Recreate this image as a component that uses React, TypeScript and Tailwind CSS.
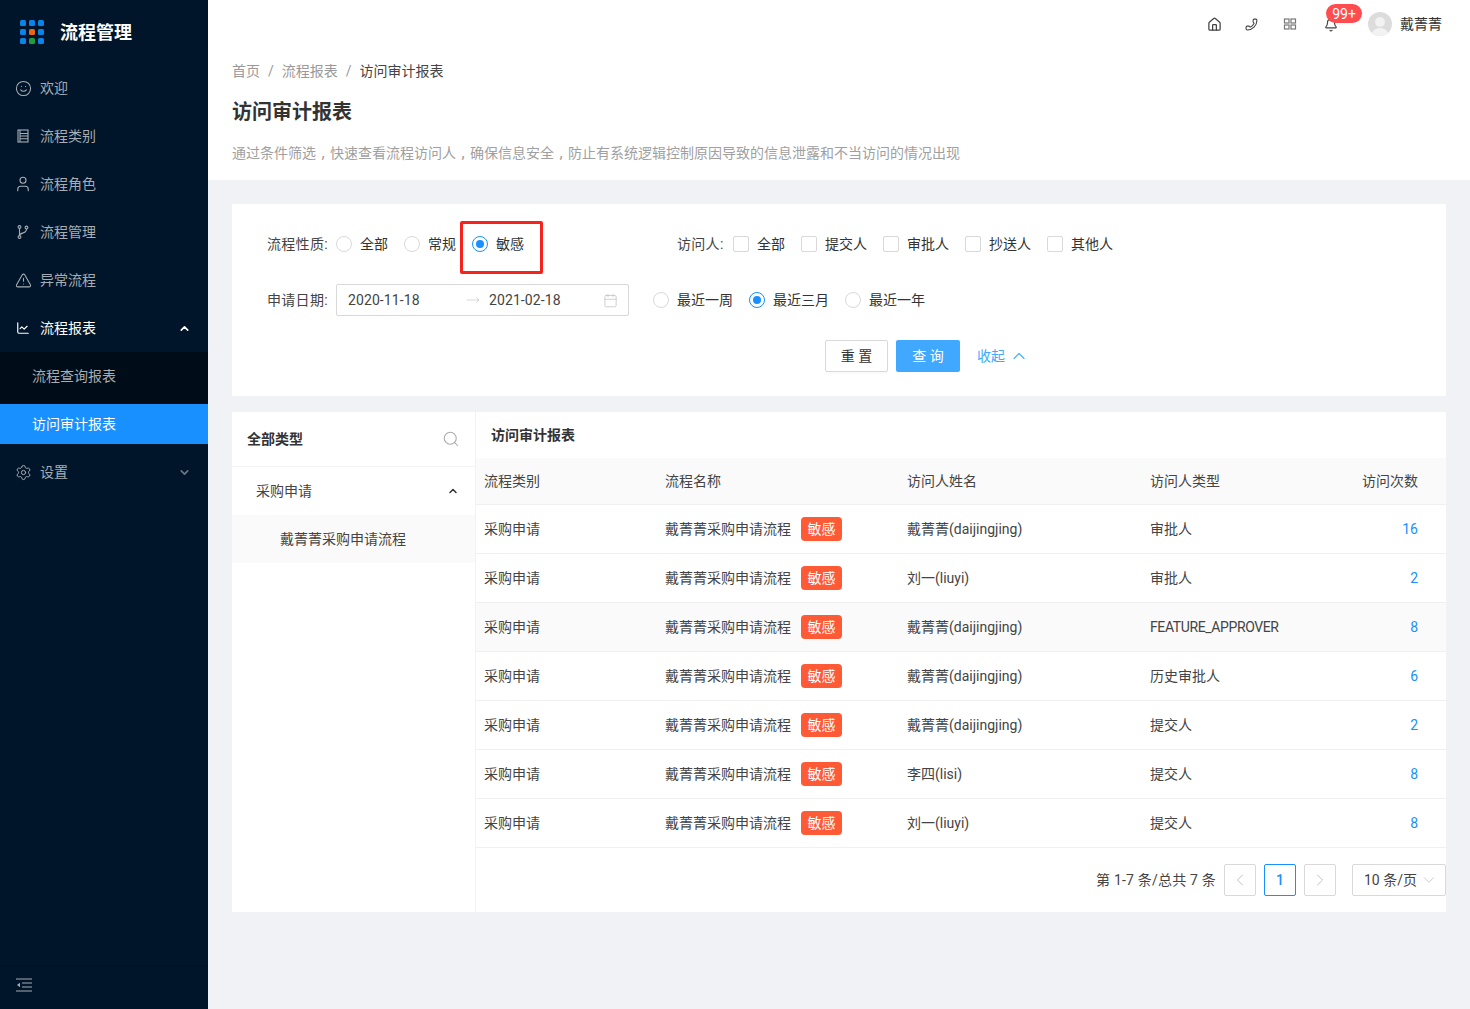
import React from "react";
import {
  Smile, User, TriangleAlert, ChartLine, Settings, ChevronUp, ChevronDown, ChevronLeft, ChevronRight,
  Home, Phone, Bell, Search, Calendar, MoveRight,
} from "lucide-react";

const FONT = { fontFamily: 'Roboto, "Noto Sans CJK SC", sans-serif' };

const rows = [
  { name: "戴菁菁(daijingjing)", type: "审批人", count: "16" },
  { name: "刘一(liuyi)", type: "审批人", count: "2" },
  { name: "戴菁菁(daijingjing)", type: "FEATURE_APPROVER", count: "8", hover: true },
  { name: "戴菁菁(daijingjing)", type: "历史审批人", count: "6" },
  { name: "戴菁菁(daijingjing)", type: "提交人", count: "2" },
  { name: "李四(lisi)", type: "提交人", count: "8" },
  { name: "刘一(liuyi)", type: "提交人", count: "8" },
];

const Logo = () => {
  const dots = ["bg-[#0a84e8]", "bg-[#0a84e8]", "bg-[#0a84e8]", "bg-[#0a84e8]", "bg-[#e8651a]", "bg-[#0a84e8]", "bg-[#0a84e8]", "bg-[#1f9d3d]", "bg-[#0a84e8]"];
  return (
    <div className="grid grid-cols-[6px_6px_6px] gap-[3px]">
      {dots.map((c, i) => <span key={i} className={`h-[6px] w-[6px] rounded-[1.5px] ${c}`} />)}
    </div>
  );
};

const ListIcon = () => (
  <svg width="14" height="14" viewBox="0 0 14 14" fill="none" stroke="currentColor" strokeWidth="1.1">
    <rect x="2" y="1" width="10" height="12" />
    <path d="M4 1v12M4 4.5h8M4 7h8M4 9.7h8" />
  </svg>
);

const BranchIcon = () => (
  <svg width="14" height="14" viewBox="0 0 14 14" fill="none" stroke="currentColor" strokeWidth="1.1">
    <circle cx="3.5" cy="2" r="1.4" />
    <circle cx="3.5" cy="12" r="1.4" />
    <circle cx="10.5" cy="2.5" r="1.4" />
    <path d="M3.5 3.4v7.2M10.5 3.9c0 3-2 3.6-4 4.2-1.6.5-3 1-3 2.5" />
  </svg>
);

const MenuItem = ({ icon, label, active, arrow }: { icon: React.ReactNode; label: string; active?: boolean; arrow?: "up" | "down" }) => (
  <div className={`mb-2 flex h-10 items-center pl-4 pr-[17px] text-sm ${active ? "text-white" : "text-[#a6adb4]"}`}>
    <span className="flex w-6 items-center">{icon}</span>
    <span className="flex-1">{label}</span>
    {arrow === "up" && <ChevronUp size={13} strokeWidth={3} />}
    {arrow === "down" && <ChevronDown size={13} strokeWidth={3} className="text-[#6b7885]" />}
  </div>
);

const Sidebar = () => (
  <aside className="flex w-[208px] shrink-0 flex-col bg-[#001529]">
    <div className="flex h-[64px] items-center gap-[16px] pl-5">
      <Logo />
      <span className="text-[18px] font-bold text-white">流程管理</span>
    </div>
    <div className="flex-1 pt-1">
      <MenuItem icon={<Smile size={17} strokeWidth={1.5} className="-ml-[1px]" />} label="欢迎" />
      <MenuItem icon={<ListIcon />} label="流程类别" />
      <MenuItem icon={<User size={18} strokeWidth={1.5} className="-ml-[2px]" />} label="流程角色" />
      <MenuItem icon={<BranchIcon />} label="流程管理" />
      <MenuItem icon={<TriangleAlert size={17} strokeWidth={1.5} className="-ml-[1px]" />} label="异常流程" />
      <MenuItem icon={<ChartLine size={14} />} label="流程报表" active arrow="up" />
      <div className="-mt-1 mb-2 bg-[#000c17] pt-1">
        <div className="mb-2 flex h-10 items-center pl-8 text-sm text-[#a6adb4]">流程查询报表</div>
        <div className="mb-1 flex h-10 items-center bg-[#1890ff] pl-8 text-sm text-white">访问审计报表</div>
      </div>
      <MenuItem icon={<Settings size={17} strokeWidth={1.4} className="-ml-[1px]" />} label="设置" arrow="down" />
    </div>
    <div className="flex h-[44px] items-start border-t border-[#00101f] pl-4 pt-[12px] text-[#a6adb4]">
      <svg width="16" height="14" viewBox="0 0 16 14" fill="none" stroke="currentColor" strokeWidth="1.2">
        <path d="M0 1h16M6 5h10M6 9h10M0 13h16" />
        <path d="M1 7l3-2.2v4.4z" fill="currentColor" stroke="none" />
      </svg>
    </div>
  </aside>
);

const Header = () => (
  <header className="flex h-[48px] items-center justify-end bg-white pr-7 text-[#444] shadow-[0_1px_4px_rgba(0,21,41,0.08)]">
    <Home size={15} />
    <Phone size={13} className="ml-[23px] -scale-x-100" />
    <svg width="14" height="14" viewBox="0 0 14 14" fill="none" stroke="#777" strokeWidth="1.2" className="ml-[25px]">
      <rect x="1.5" y="2" width="4.5" height="4" />
      <rect x="8" y="2" width="4.5" height="4" />
      <rect x="1.5" y="8" width="4.5" height="4" />
      <rect x="8" y="8" width="4.5" height="4" />
    </svg>
    <div className="relative ml-[27px] flex h-6 items-center">
      <Bell size={14} className="translate-y-[1px]" />
      <span className="absolute left-[2px] top-[-8px] flex h-[19px] w-[36px] items-center justify-center rounded-full bg-[#ff4d4f] text-sm leading-none text-white">99+</span>
    </div>
    <div className="ml-[30px] flex h-6 w-6 items-center justify-center overflow-hidden rounded-full bg-[#dcdcdc]">
      <svg width="24" height="24" viewBox="0 0 24 24" fill="#f2f2f2">
        <circle cx="12" cy="10" r="5" />
        <path d="M3 24c1-6 5-8 9-8s8 2 9 8z" />
      </svg>
    </div>
    <span className="ml-2 text-[14px] text-[#333]">戴菁菁</span>
  </header>
);

const Radio = ({ label, checked }: { label: string; checked?: boolean }) => (
  <label className="flex items-center gap-2 text-sm text-[#333]">
    <span className={`flex h-4 w-4 items-center justify-center rounded-full border ${checked ? "border-[#1890ff]" : "border-[#d9d9d9]"}`}>
      {checked && <span className="h-2 w-2 rounded-full bg-[#1890ff]" />}
    </span>
    {label}
  </label>
);

const Check = ({ label }: { label: string }) => (
  <label className="flex items-center gap-2 text-sm text-[#333]">
    <span className="h-4 w-4 rounded-[2px] border border-[#d9d9d9]" />
    {label}
  </label>
);

const FilterCard = () => (
  <section className="relative flex flex-col gap-6 bg-white py-6 pl-[35px]">
    <div className="flex h-8 items-center">
      <span className="w-[69px] text-sm tracking-[0.3px] text-[#444]">流程性质:</span>
      <div className="flex gap-4">
        <Radio label="全部" />
        <Radio label="常规" />
        <Radio label="敏感" checked />
      </div>
      <span className="ml-[153px] w-[56px] text-sm tracking-[0.3px] text-[#444]">访问人:</span>
      <div className="flex gap-4">
        <Check label="全部" />
        <Check label="提交人" />
        <Check label="审批人" />
        <Check label="抄送人" />
        <Check label="其他人" />
      </div>
    </div>
    <div className="flex h-8 items-center">
      <span className="w-[69px] text-sm tracking-[0.3px] text-[#444]">申请日期:</span>
      <div className="flex h-8 w-[293px] items-center rounded-[2px] border border-[#d9d9d9] pl-[11px] text-sm tracking-[0.1px] text-[#444]">
        <span className="w-[118px]">2020-11-18</span>
        <MoveRight size={14} strokeWidth={1} className="text-[#bbb]" />
        <span className="ml-[9px] w-[114px]">2021-02-18</span>
        <Calendar size={15} strokeWidth={1.1} className="text-[#bbb]" />
      </div>
      <div className="ml-6 flex gap-4">
        <Radio label="最近一周" />
        <Radio label="最近三月" checked />
        <Radio label="最近一年" />
      </div>
    </div>
    <div className="flex h-8 items-center pl-[558px]">
      <button className="h-8 w-[63px] rounded-[2px] border border-[#d9d9d9] text-sm text-[#333] shadow-[0_2px_0_rgba(0,0,0,0.015)]">重 置</button>
      <button className="ml-2 h-8 w-[64px] rounded-[2px] bg-[#40a9ff] text-sm text-white">查 询</button>
      <span className="ml-[17px] text-sm text-[#40a9ff]">收起</span>
      <ChevronUp size={20} strokeWidth={1.3} className="ml-[4px] text-[#40a9ff]" />
    </div>
    <div className="absolute left-[228px] top-[17px] h-[53px] w-[83px] rounded-[2px] border-[3px] border-[#f5231b]" />
  </section>
);

const TreePanel = () => (
  <div className="w-[244px] shrink-0 border-r border-[#f2f2f2]">
    <div className="flex h-[55px] items-center justify-between border-b border-[#f5f5f5] pl-[15px] pr-[15px]">
      <span className="text-sm font-semibold text-[#333]">全部类型</span>
      <Search size={18} strokeWidth={1.4} className="text-[#aaa]" />
    </div>
    <div className="flex h-12 items-center justify-between pl-6 pr-[16px] text-sm text-[#444]">
      <span>采购申请</span>
      <ChevronUp size={12} strokeWidth={3} className="text-[#333]" />
    </div>
    <div className="flex h-12 items-center bg-[#fafafa] pl-12 text-sm text-[#444]">戴菁菁采购申请流程</div>
  </div>
);

const COLS = "grid grid-cols-[181px_242px_243px_1fr_auto] items-center pl-2 pr-7 text-sm text-[#444]";

const ReportTable = () => (
  <div className="min-w-0 flex-1">
    <div className="flex h-[46px] items-center pl-[15px] text-sm font-semibold text-[#333]">访问审计报表</div>
    <div className={`${COLS} h-[47px] border-b border-[#f0f0f0] bg-[#fafafa]`}>
      <span>流程类别</span>
      <span>流程名称</span>
      <span>访问人姓名</span>
      <span>访问人类型</span>
      <span>访问次数</span>
    </div>
    {rows.map((r, i) => (
      <div key={i} className={`${COLS} h-[49px] border-b border-[#f0f0f0] ${r.hover ? "bg-[#fafafa]" : ""}`}>
        <span>采购申请</span>
        <span className="flex items-center gap-[10px]">
          戴菁菁采购申请流程
          <span className="flex h-6 w-[41px] items-center justify-center rounded bg-[#ff5a36] text-white">敏感</span>
        </span>
        <span>{r.name}</span>
        <span className={r.hover ? "tracking-[-0.38px]" : ""}>{r.type}</span>
        <span className="text-right text-[#1890ff]">{r.count}</span>
      </div>
    ))}
    <div className="flex items-center justify-end pt-4 text-sm text-[#444]">
      <span className="mr-2 tracking-[0.2px]">第 1-7 条/总共 7 条</span>
      <span className="flex h-8 w-8 items-center justify-center rounded-[2px] border border-[#d9d9d9] text-[#bbb]"><ChevronLeft size={20} strokeWidth={1.1} /></span>
      <span className="ml-2 flex h-8 w-8 items-center justify-center rounded-[2px] border border-[#1890ff] font-medium text-[#1890ff]">1</span>
      <span className="ml-2 flex h-8 w-8 items-center justify-center rounded-[2px] border border-[#d9d9d9] text-[#bbb]"><ChevronRight size={20} strokeWidth={1.1} /></span>
      <span className="ml-4 flex h-8 w-[94px] items-center justify-between rounded-[2px] border border-[#d9d9d9] pl-[11px] pr-[7px]">
        10 条/页
        <ChevronDown size={18} strokeWidth={1} className="text-[#bbb]" />
      </span>
    </div>
  </div>
);

const Comma = () => <span className="inline-block w-[14px] text-center text-base leading-none">,</span>;

export default function App() {
  return (
    <div className="flex h-[1009px] overflow-hidden bg-[#f0f2f5]" style={FONT}>
      <Sidebar />
      <main className="min-w-0 flex-1">
        <Header />
        <div className="h-[132px] bg-white px-6 pt-[13px]">
          <div className="flex gap-[8px] text-sm leading-5 text-[#999]">
            <span>首页</span><span>/</span><span>流程报表</span><span>/</span><span className="text-[#444]">访问审计报表</span>
          </div>
          <h1 className="mt-[17px] text-[20px] font-semibold leading-7 text-[#333]">访问审计报表</h1>
          <p className="mt-[17px] text-sm leading-5 text-[#a0a0a0]">通过条件筛选<Comma />快速查看流程访问人<Comma />确保信息安全<Comma />防止有系统逻辑控制原因导致的信息泄露和不当访问的情况出现</p>
        </div>
        <div className="flex flex-col gap-4 pl-6 pr-6 pt-6">
          <FilterCard />
          <section className="flex h-[500px] bg-white">
            <TreePanel />
            <ReportTable />
          </section>
        </div>
      </main>
    </div>
  );
}
